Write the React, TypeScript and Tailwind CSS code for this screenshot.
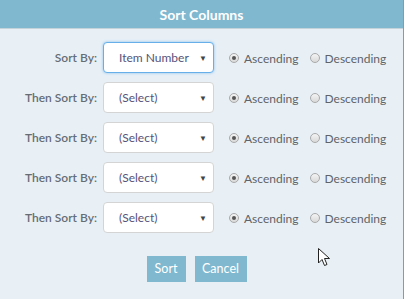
const rows = [
  { label: 'Sort By:', value: 'Item Number', focused: true },
  { label: 'Then Sort By:', value: '(Select)', focused: false },
  { label: 'Then Sort By:', value: '(Select)', focused: false },
  { label: 'Then Sort By:', value: '(Select)', focused: false },
  { label: 'Then Sort By:', value: '(Select)', focused: false },
];

const Radio = ({ checked, label }: { checked: boolean; label: string }) => (
  <label className="flex items-center gap-[5px]">
    <span className="flex h-[10px] w-[10px] items-center justify-center rounded-full border border-[#a9a9a9] bg-gradient-to-b from-[#f4f4f4] to-[#d9d9d9]">
      {checked && <span className="h-[4px] w-[4px] rounded-full bg-[#555]" />}
    </span>
    <span className="mt-[3px] text-[12px] text-[#5f6368]">{label}</span>
  </label>
);

export default function App() {
  return (
    <div className="relative flex h-[299px] w-[406px] bg-white" style={{ fontFamily: 'Lato, "Open Sans", sans-serif' }}>
      <div className="flex h-full w-[404px] flex-col border-r border-[#8a9aa3] bg-[#e8f0f6]">
        {/* Header */}
        <div className="flex h-[29px] shrink-0 items-center justify-center border-b border-[#c4d2da] bg-[#7fb8cf]">
          <span className="text-[14px] font-bold text-white">Sort Columns</span>
        </div>

        {/* Rows */}
        <div className="flex flex-col gap-[9px] pt-[13px]">
          {rows.map((row, i) => (
            <div key={i} className="flex items-center">
              <div className="w-[103px] pr-[6px] text-right text-[12px] font-semibold text-[#666d75]">{row.label}</div>
              <div
                className={`flex h-[31px] w-[111px] items-center justify-between rounded-[4px] bg-white pl-[15px] pr-[6px] text-[12px] text-[#55537a] ${
                  row.focused ? 'border border-[#66afe9] shadow-[0_0_3px_rgba(102,175,233,0.7)]' : 'border border-[#d4d4d4]'
                }`}
              >
                <span>{row.value}</span>
                <span className="text-[8px] text-[#444]">▼</span>
              </div>
              <div className="ml-[15px] flex items-center gap-[11px]">
                <Radio checked label="Ascending" />
                <Radio checked={false} label="Descending" />
              </div>
            </div>
          ))}
        </div>

        {/* Buttons */}
        <div className="mt-[23px] flex justify-center gap-[9px] pr-[10px]">
          <button className="h-[26px] w-[39px] bg-[#7fb8cf] text-[12.5px] text-white">Sort</button>
          <button className="h-[26px] w-[52px] bg-[#7fb8cf] text-[12.5px] text-white">Cancel</button>
        </div>
      </div>

      {/* mouse cursor */}
      <svg className="absolute left-[318px] top-[248px]" width="13" height="19" viewBox="0 0 13 19">
        <path d="M0.5 0.5 L0.5 15 L4 11.5 L6.5 17.5 L9 16.5 L6.5 10.5 L11.5 10.5 Z" fill="white" stroke="#222" strokeWidth="1" strokeLinejoin="round" />
      </svg>
    </div>
  );
}
